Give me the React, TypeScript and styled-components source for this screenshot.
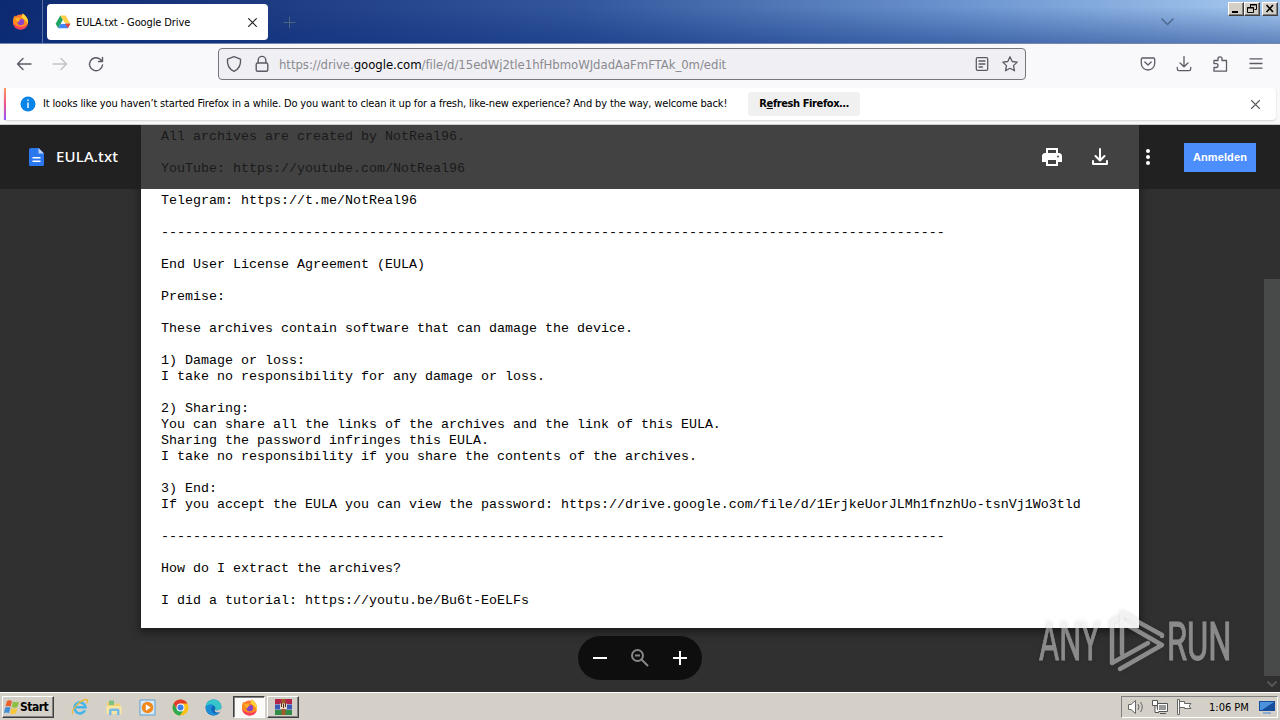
import React from "react";
import styled, { createGlobalStyle } from "styled-components";

const UI_FONT = `"DejaVu Sans Condensed", "DejaVu Sans", "Noto Sans", sans-serif`;

const GlobalStyle = createGlobalStyle`
  body {
    margin: 0;
    overflow: hidden;
    font-family: ${UI_FONT};
  }

  * {
    box-sizing: border-box;
  }

  svg {
    display: block;
    flex: none;
  }
`;

const Desktop = styled.div`
  width: 1280px;
  height: 720px;
  display: flex;
  flex-direction: column;
  overflow: hidden;
`;

const TabStrip = styled.header`
  height: 44px;
  flex: none;
  display: flex;
  align-items: flex-start;
  background:
    linear-gradient(180deg, rgba(255, 255, 255, 0) 15%, rgba(10, 46, 126, 0.45)),
    linear-gradient(90deg, #0c2a70 0, #1c3a80 20%, #33569b 45%, #6c94cf 75%, #a6caf0 100%);
  border-bottom: 1px solid #7588ae;
`;

const PinnedTab = styled.div`
  width: 43px;
  height: 43px;
  padding: 13px 0 0 12px;
  border-right: 1px solid #5a72a8;
`;

const Tab = styled.div`
  width: 221px;
  height: 36px;
  margin: 4px 0 0 4px;
  padding: 0 10px 0 8px;
  display: flex;
  align-items: center;
  border-radius: 4px;
  background: #fff;
`;

const Label = styled.span<{ $size?: number; $spacing?: number; $color?: string }>`
  font-size: ${({ $size }) => $size || 11}px;
  letter-spacing: ${({ $spacing }) => $spacing || 0}px;
  color: ${({ $color }) => $color || "#000"};
  white-space: pre;
`;

const TabTitle = styled(Label)`
  flex: 1;
  margin: 1px 0 0 5px;
`;

const NewTab = styled.div`
  margin: 16px 0 0 15px;
`;

const TabStripEnd = styled.div`
  flex: 1;
  display: flex;
  justify-content: flex-end;
`;

const ListTabs = styled.div`
  margin: 14px 53px 0 0;
`;

const WindowControls = styled.div`
  display: flex;
  padding: 2px 2px 0 0;
`;

const WindowButton = styled.div<{ $gap?: boolean }>`
  width: 16px;
  height: 14px;
  margin-left: ${({ $gap }) => ($gap ? 2 : 0)}px;
  background: #d4d0c8;
  border: 1px solid;
  border-color: #fff #404040 #404040 #fff;
  box-shadow: inset -1px -1px #808080;
`;

const NavBar = styled.nav`
  height: 44px;
  flex: none;
  display: flex;
  align-items: center;
  padding: 0 15px 4px 15px;
  background: #f9f9fb;
`;

const NavButtons = styled.div`
  width: 203px;
  display: flex;
  gap: 18px;
`;

const UrlBar = styled.div`
  width: 808px;
  height: 32px;
  display: flex;
  align-items: center;
  padding: 0 6px;
  border: 1px solid #77767c;
  border-radius: 4px;
  background: #f0f0f4;
`;

const Url = styled.div`
  flex: 1;
  margin-left: 8px;
  font-size: 13px;
  letter-spacing: -0.04px;
  color: #8a8a90;
  white-space: pre;

  b {
    font-weight: normal;
    color: #000;
  }
`;

const UrlIcons = styled.div`
  display: flex;
  gap: 10px;
`;

const NavTools = styled.div`
  flex: 1;
  display: flex;
  justify-content: flex-end;
  gap: 18px;
`;

const NoticeWrap = styled.div`
  height: 37px;
  flex: none;
  padding: 0 4px 4px;
  background: #f9f9fb;
  border-bottom: 1px solid #ccc;
`;

const Notice = styled.div`
  height: 32px;
  position: relative;
  display: flex;
  align-items: center;
  padding: 0 15px 0 16px;
  background: #fff;
  box-shadow: 0 1px 2px rgba(58, 57, 68, 0.2);
  border-radius: 4px;
`;

const NoticeStripe = styled.div`
  position: absolute;
  left: 0;
  top: 0;
  width: 2px;
  height: 32px;
  background: linear-gradient(#ff9a5c, #f0508c 50%, #9059ff);
`;

const NoticeText = styled(Label)`
  width: 705px;
  margin: -2px 0 0 7px;
`;

const RefreshButton = styled.div`
  width: 112px;
  height: 24px;
  margin-right: auto;
  border-radius: 4px;
  background: #f0f0f0;
  font-size: 11px;
  font-weight: bold;
  line-height: 24px;
  letter-spacing: -0.4px;
  text-align: center;
  color: #000;
`;

const Viewer = styled.main`
  height: 567px;
  flex: none;
  position: relative;
  overflow: hidden;
  display: flex;
  flex-direction: column;
  align-items: flex-start;
  background: #303030;
`;

const Paper = styled.pre`
  width: 998px;
  height: 503px;
  margin: 0 0 0 141px;
  padding: 4px 20px 0;
  background: #fff;
  box-shadow: 0 3px 8px 2px rgba(0, 0, 0, 0.4);
  color: #000;
  font: 13.333px / 16px "Liberation Mono", monospace;
`;

const ViewerBar = styled.div`
  position: absolute;
  left: 0;
  top: 0;
  width: 1280px;
  height: 64px;
  display: flex;
  align-items: center;
  padding: 0 24px;
  background: rgba(31, 31, 31, 0.845);
`;

const FileName = styled.div`
  flex: 1;
  margin: -2px 0 0 8px;
  font: 500 15px "Noto Sans", sans-serif;
  letter-spacing: 0.15px;
  color: #fff;
`;

const ViewerActions = styled.div`
  display: flex;
  align-items: center;
  gap: 24px;
`;

const SignIn = styled.div`
  width: 72px;
  height: 29px;
  background: #4c8efb;
  color: #fff;
  font: bold 11px / 29px "Liberation Sans", sans-serif;
  letter-spacing: 0.1px;
  text-align: center;
`;

const ZoomPill = styled.div`
  position: absolute;
  left: 578px;
  top: 511px;
  width: 124px;
  height: 44px;
  display: flex;
  align-items: center;
  justify-content: space-between;
  padding: 0 10px;
  border-radius: 22px;
  background: #0e0e0e;
`;

const Scrollbar = styled.div`
  position: absolute;
  right: 0;
  top: 64px;
  width: 16px;
  height: 503px;
  padding-top: 90px;
  background: #303030;
`;

const ScrollThumb = styled.div`
  height: 397px;
  background: #484a4a;
`;

const Watermark = styled.div`
  position: absolute;
  left: 1036px;
  top: 483px;
  opacity: 0.5;
  filter: drop-shadow(0 0 2px rgba(0, 0, 0, 0.3));

  text {
    font: 53px Roboto, sans-serif;
  }
`;

const Taskbar = styled.footer`
  height: 28px;
  flex: none;
  display: flex;
  align-items: center;
  padding: 1px 2px 0;
  background: #d4d0c8;
  border-top: 1px solid #fff;
`;

const StartButton = styled.div`
  width: 52px;
  height: 22px;
  display: flex;
  align-items: center;
  padding-left: 1px;
  border: 1px solid;
  border-color: #fff #404040 #404040 #fff;
  box-shadow: inset -1px -1px #808080;
  font: bold 12px ${UI_FONT};
  letter-spacing: -0.5px;
  color: #000;
`;

const Launchers = styled.div`
  width: 179px;
  display: flex;
  align-items: center;
  gap: 16px;
  padding-left: 17px;
`;

const TaskButton = styled.div<{ $pressed?: boolean }>`
  width: 32px;
  height: 22px;
  margin-right: 2px;
  display: flex;
  align-items: center;
  justify-content: center;
  border: 1px solid;
  border-color: ${({ $pressed }) =>
    $pressed ? "#404040 #fff #fff #404040" : "#fff #404040 #404040 #fff"};
  box-shadow: ${({ $pressed }) =>
    $pressed ? "inset 1px 1px #808080" : "inset -1px -1px #808080"};
  background: ${({ $pressed }) => ($pressed ? "#fbfaf8" : "#d4d0c8")};
`;

const Tray = styled.div`
  width: 157px;
  height: 22px;
  margin-left: auto;
  display: flex;
  align-items: center;
  padding-left: 5px;
  border: 1px solid;
  border-color: #808080 #fff #fff #808080;
`;

const TrayIcons = styled.div`
  display: flex;
  gap: 8px;
  width: 82px;
`;

const Clock = styled(Label)`
  width: 50px;
`;

type StrokeIconProps = {
  d: string;
  size?: number;
  box?: number;
  color?: string;
  width?: number;
};

const StrokeIcon = ({
  d,
  size = 18,
  box = 18,
  color = "#5b5b66",
  width = 1.4,
}: StrokeIconProps) => (
  <svg
    width={size}
    height={size}
    viewBox={`0 0 ${box} ${box}`}
    fill="none"
    stroke={color}
    strokeWidth={width}
    strokeLinecap="round"
    strokeLinejoin="round"
  >
    <path d={d} />
  </svg>
);

const FirefoxLogo = () => (
  <svg width="17" height="17" viewBox="0 0 17 17">
    <circle cx="8.500" cy="9" r="7.500" fill="#ff7139" />
    <path d="M1 8C1 5 2 4 2.800 2.600L4.500 4.500L10 3L11 .5C14 2.500 16.300 6 16 10C13 16 5 18 1.800 12Z" fill="#ff8a1c" />
    <path d="M10.500 .5C14 3 16.700 6 15.900 11C14.700 8 12 6 9.500 4.200Z" fill="#ffd43a" />
    <path d="M1.200 10C2 15 6 17 10 16.400C13 16 15 14 15.700 11.500C12 14.500 5 15 1.200 10Z" fill="#f8405c" />
    <circle cx="8.800" cy="9" r="3.300" fill="#8a43c8" />
    <path d="M3.500 5C6 4.500 8 5.300 9 6.800C7.500 7 6.600 7.700 7 9C4.800 9 3.500 7.500 3.500 5Z" fill="#ffae25" />
  </svg>
);

const DriveLogo = () => (
  <svg width="16" height="16" viewBox="0 0 16 16">
    <path d="M5.400 1.500L8 6L3.200 14.300L.6 9.800Z" fill="#20a464" />
    <path d="M5.400 1.500H10.600L15.400 9.800H10.200Z" fill="#ffcf48" />
    <path d="M5.700 9.800H15.400L12.800 14.300H3.200Z" fill="#4086f4" />
    <path d="M12.800 14.300L10.200 9.800H15.400Z" fill="#ea4335" />
    <path d="M8 6L10.200 9.800H5.800Z" fill="#fff" />
  </svg>
);

const WindowsFlag = () => (
  <svg width="16" height="16" viewBox="0 0 16 16">
    <path d="M3 2Q5 .5 8 2L6.700 7.500Q4 6.300 1.500 7.500Z" fill="#e9602c" />
    <path d="M9 2.500Q12 4 15 2.500L13.500 8Q11 9.300 7.700 8Z" fill="#8bc043" />
    <path d="M1.300 8.500Q4 7.300 6.500 8.500L5 14Q2.500 13 0 14Z" fill="#3f8ed8" />
    <path d="M7.500 9Q10.500 10.300 13.200 9L12 14.300Q9 15.800 6 14.500Z" fill="#f9c838" />
  </svg>
);

const ExplorerLogo = () => (
  <svg width="18" height="18" viewBox="0 0 18 18" fill="none">
    <path d="M14 12.300A5.500 5.500 0 1 1 14.500 9.300H5" stroke="#45b4ea" strokeWidth="2.600" />
    <path d="M2 16C-1 13 9 2 15 1.500C18 1.500 16.500 4 15.500 5.500" stroke="#e8b93c" strokeWidth="1.300" />
  </svg>
);

const FolderLogo = () => (
  <svg width="18" height="18" viewBox="0 0 18 18">
    <path d="M2 4H7L8.500 5.500H15V16H2Z" fill="#efd077" />
    <path d="M4 2.500H9V7H4Z" fill="#7dc080" />
    <path d="M1.500 8H16.500V16H1.500Z" fill="#f8e6a0" />
    <path d="M4 17V12Q4 10.500 6 10.500H13Q14.500 10.500 14.500 12V17H12V13H6.500V17Z" fill="#79b9e5" />
  </svg>
);

const MediaLogo = () => (
  <svg width="17" height="17" viewBox="0 0 17 17">
    <path d="M1 1H16V16H1Z" fill="#d8e9f7" stroke="#5b9fd3" />
    <circle cx="8.500" cy="8.500" r="5.800" fill="#f08a1d" />
    <path d="M6.800 5.300L11.800 8.500L6.800 11.700Z" fill="#fff" />
  </svg>
);

const ChromeLogo = () => (
  <svg width="17" height="17" viewBox="0 0 17 17">
    <circle cx="8.500" cy="8.500" r="8" fill="#fbc116" />
    <path d="M1.600 4.500A8 8 0 0 1 15.400 4.500H8.500L5 10.500Z" fill="#e33b2e" />
    <path d="M1.600 4.500A8 8 0 0 0 8 16.500L11.900 10.500L5 10.500Z" fill="#2da94f" />
    <circle cx="8.500" cy="8.500" r="4" fill="#fff" />
    <circle cx="8.500" cy="8.500" r="3" fill="#3f7de8" />
  </svg>
);

const EdgeLogo = () => (
  <svg width="17" height="17" viewBox="0 0 17 17">
    <circle cx="8.500" cy="8.500" r="8" fill="#1468b8" />
    <path d="M.6 8C1 3 5 .4 8.500 .5C13 .5 16.500 4 16.500 7.500C16.500 11 12 12.300 10 10.700C11.500 8 9 6 6.500 6C4 6 1.500 7 .6 8Z" fill="#36c6c9" />
    <path d="M.6 8C2 5 7 4.500 9 6.500C6 7 5.500 10 7 12.500C8.500 15 12 15 14.500 13.500C10 19 1 16.500 .6 8Z" fill="#1b8fd6" />
    <path d="M10 10.700C12 12.300 16.500 11 16.500 7.500V12L14.500 13.200C12 14 9 13 10 10.700Z" fill="#d4d0c8" />
  </svg>
);

const ArchiveLogo = () => (
  <svg width="17" height="16" viewBox="0 0 17 16">
    <path d="M0 0H17V5H0Z" fill="#b3264a" />
    <path d="M0 5.500H17V10.500H0Z" fill="#3c59b5" />
    <path d="M0 11H17V16H0Z" fill="#2f8b46" />
    <path d="M6.500 0H10.500V16H6.500Z" fill="#a35b2a" />
    <path d="M5 4.500H12V10H5Z" fill="#e7d9c4" />
    <path d="M6.500 4V8M8.500 5V9M10.500 4V8" stroke="#5b2b21" />
  </svg>
);

const EULA = `All archives are created by NotReal96.

YouTube: https://youtube.com/NotReal96

Telegram: https://t.me/NotReal96

${"-".repeat(98)}

End User License Agreement (EULA)

Premise:

These archives contain software that can damage the device.

1) Damage or loss:
I take no responsibility for any damage or loss.

2) Sharing:
You can share all the links of the archives and the link of this EULA.
Sharing the password infringes this EULA.
I take no responsibility if you share the contents of the archives.

3) End:
If you accept the EULA you can view the password: https://drive.google.com/file/d/1ErjkeUorJLMh1fnzhUo-tsnVj1Wo3tld

${"-".repeat(98)}

How do I extract the archives?

I did a tutorial: https://youtu.be/Bu6t-EoELFs`;

const BrowserTabs = () => (
  <TabStrip>
    <PinnedTab>
      <FirefoxLogo />
    </PinnedTab>
    <Tab>
      <DriveLogo />
      <TabTitle $spacing={-0.12}>EULA.txt - Google Drive</TabTitle>
      <StrokeIcon d="M1.500 1.500L8.500 8.500M8.500 1.500L1.500 8.500" size={11} box={10} color="#222" width={1.1} />
    </Tab>
    <NewTab>
      <StrokeIcon d="M6.500 1V12M1 6.500H12" size={13} box={13} color="#4c6482" width={1} />
    </NewTab>
    <TabStripEnd>
      <ListTabs>
        <StrokeIcon d="M2 5L7.500 10.500L13 5" size={15} box={15} color="#4d698f" width={1.5} />
      </ListTabs>
      <WindowControls>
        <WindowButton>
          <svg width="13" height="11">
            <path d="M3 8H9V10H3Z" />
          </svg>
        </WindowButton>
        <WindowButton>
          <svg width="13" height="11" fill="none" stroke="#000">
            <path d="M5.500 4V1.500H11.500V6.500H9.500M5 2H12M2.500 4.500H8.500V9.500H2.500ZM2 5H9" />
          </svg>
        </WindowButton>
        <WindowButton $gap>
          <svg width="13" height="11" fill="none" stroke="#000" strokeWidth="1.600">
            <path d="M3.500 2L10 9M10 2L3.500 9" />
          </svg>
        </WindowButton>
      </WindowControls>
    </TabStripEnd>
  </TabStrip>
);

const BrowserNav = () => (
  <NavBar>
    <NavButtons>
      <StrokeIcon d="M16 9H2.500M8 3.500L2.500 9L8 14.500" />
      <StrokeIcon d="M2 9H15.500M10 3.500L15.500 9L10 14.500" color="#c3c3c8" />
      <StrokeIcon d="M15.500 10A6.500 6.500 0 1 1 13.500 4.500L15.500 6.500M15.500 2.500V6.500H11.500" />
    </NavButtons>
    <UrlBar>
      <StrokeIcon d="M9 1.700L15.500 4.200C16 9 14 14 9 16.300C4 14 2 9 2.500 4.200Z" />
      <svg width="28" height="18" viewBox="-10 0 28 18" fill="none" stroke="#5b5b66" strokeWidth="1.400">
        <rect x="3.200" y="8" width="11.600" height="8.300" rx="1.500" />
        <path d="M5.200 8V5.200A3.800 3.800 0 0 1 12.800 5.200V8" />
      </svg>
      <Url>
        https://drive.<b>google.com</b>/file/d/15edWj2tle1hfHbmoWJdadAaFmFTAk_0m/edit
      </Url>
      <UrlIcons>
        <StrokeIcon d="M4.500 2.700H13.500Q14.700 2.700 14.700 4V14Q14.700 15.300 13.500 15.300H4.500Q3.300 15.300 3.300 14V4Q3.300 2.700 4.500 2.700ZM6 6H12M6 9H12M6 12H9.500" width={1.3} />
        <StrokeIcon d="M9 1.800L11.200 6.500L16.200 7.100L12.500 10.600L13.500 15.800L9 13.300L4.500 15.800L5.500 10.600L1.800 7.100L6.800 6.500Z" width={1.3} />
      </UrlIcons>
    </UrlBar>
    <NavTools>
      <StrokeIcon d="M3.500 3H14.500Q15.700 3 15.700 4.200V8.500A6.700 6.500 0 0 1 2.300 8.500V4.200Q2.300 3 3.500 3ZM5.800 7L9 10L12.200 7" width={1.3} />
      <StrokeIcon d="M9 1.500V11.500M5 8L9 11.700L13 8M2.300 12.500V14Q2.300 15.700 4 15.700H14Q15.700 15.700 15.700 14V12.500" width={1.3} />
      <StrokeIcon d="M3 16.200V12.500H5Q7 12.500 7 10.500T5 8.600H3V5.500H7V3.800Q7 1.800 9 1.800T11 3.800V5.500H15.500V16.200Z" width={1.3} />
      <StrokeIcon d="M3 3.800H15M3 8.500H15M3 13.200H15" width={1.3} />
    </NavTools>
  </NavBar>
);

const RefreshNotice = () => (
  <NoticeWrap>
    <Notice>
      <NoticeStripe />
      <svg width="16" height="16" viewBox="0 0 16 16">
        <circle cx="8" cy="8" r="7.500" fill="#0b84e8" />
        <path d="M7.300 3.500H8.700V5H7.300ZM7.300 6.500H8.700V12H7.300Z" fill="#fff" />
      </svg>
      <NoticeText $spacing={-0.147}>
        It looks like you haven’t started Firefox in a while. Do you want to clean it up for a fresh, like-new experience? And by the way, welcome back!
      </NoticeText>
      <RefreshButton>
        R<u>e</u>fresh Firefox…
      </RefreshButton>
      <StrokeIcon d="M1.500 1.500L9.500 9.500M9.500 1.500L1.500 9.500" size={11} box={11} width={1.1} />
    </Notice>
  </NoticeWrap>
);

const DriveViewer = () => (
  <Viewer>
    <Paper>{EULA}</Paper>
    <Scrollbar>
      <ScrollThumb />
      <StrokeIcon d="M4 6L8 10L12 6" size={16} box={16} color="#555" width={2} />
    </Scrollbar>
    <ViewerBar>
      <svg width="24" height="24" viewBox="0 0 24 24">
        <path d="M7 3H14.500L20 8.500V19.500Q20 21 18.500 21H6.500Q5 21 5 19.500V4.500Q5 3 7 3Z" fill="#2a77ee" />
        <path d="M14.500 3L20 8.500H14.500Z" fill="#b7d2fb" />
        <path d="M8.500 12H16.500V13.600H8.500ZM8.500 15.500H16.500V17.100H8.500Z" fill="#fff" />
      </svg>
      <FileName>EULA.txt</FileName>
      <ViewerActions>
        <svg width="24" height="24" viewBox="0 0 24 24" fill="#fff">
          <path d="M19 8h-1V3H6v5H5c-1.660 0-3 1.340-3 3v6h4v4h12v-4h4v-6c0-1.660-1.340-3-3-3zM8 5h8v3H8V5zm8 12v2H8v-4h8v2zm2-2v-2H6v2H4v-4c0-.55.45-1 1-1h14c.55 0 1 .45 1 1v4h-2z" />
          <path d="M4 10H20V13H4ZM4 13H6V15H4ZM18 13H20V15H18Z" />
          <circle cx="18" cy="11.500" r="1" fill="#424242" />
        </svg>
        <StrokeIcon d="M12 4V15M7.500 11L12 15.500L16.500 11M5 16V19H19V16" size={24} box={24} color="#fff" width={2} />
        <svg width="24" height="24" viewBox="0 0 24 24" fill="#fff">
          <circle cx="12" cy="6" r="2" />
          <circle cx="12" cy="12" r="2" />
          <circle cx="12" cy="18" r="2" />
        </svg>
        <SignIn>Anmelden</SignIn>
      </ViewerActions>
    </ViewerBar>
    <ZoomPill>
      <svg width="24" height="24" fill="#fff">
        <path d="M5 11H19V13H5Z" />
      </svg>
      <svg width="24" height="24" fill="none" stroke="#868686" strokeWidth="2">
        <circle cx="9.500" cy="9.500" r="5.500" />
        <path d="M13.500 13.500L20 20M7 9.500H12" />
      </svg>
      <svg width="24" height="24" fill="#fff">
        <path d="M5 11H11V5H13V11H19V13H13V19H11V13H5Z" />
      </svg>
    </ZoomPill>
    <Watermark>
      <svg width="204" height="72" viewBox="0 0 204 72" fill="none" stroke="#e6e6e6">
        <text transform="translate(3 52) scale(0.585 1)" fill="#e6e6e6" strokeWidth="1">ANY</text>
        <text transform="translate(131 52) scale(0.615 1)" fill="#e6e6e6" strokeWidth="1">RUN</text>
        <path
          d="M86 46V5L126 27V28M86 14L126 37L84 61M80 11L76 14V55L112 35"
          strokeWidth="4.500"
          strokeLinecap="round"
          strokeLinejoin="round"
        />
      </svg>
    </Watermark>
  </Viewer>
);

const SystemTaskbar = () => (
  <Taskbar>
    <StartButton>
      <WindowsFlag />
      Start
    </StartButton>
    <Launchers>
      <ExplorerLogo />
      <FolderLogo />
      <MediaLogo />
      <ChromeLogo />
      <EdgeLogo />
    </Launchers>
    <TaskButton $pressed>
      <FirefoxLogo />
    </TaskButton>
    <TaskButton>
      <ArchiveLogo />
    </TaskButton>
    <Tray>
      <TrayIcons>
        <svg width="17" height="16" fill="#fff" stroke="#666">
          <path d="M1.500 5.500H4L8.500 1.500V14.500L4 10.500H1.500Z" />
          <path d="M11 5Q13 8 11 11M13.500 3Q17 8 13.500 13" fill="none" />
        </svg>
        <svg width="16" height="16" fill="#fff" stroke="#555">
          <path d="M5.500 4.500H15.500V12.500H5.500ZM8 14.500H14" />
          <path d="M7 6H14V11H7Z" fill="#999" stroke="none" />
          <path d="M.5 1.500H5.500V6.500H.5ZM3 6.500V13.500H7" />
        </svg>
        <svg width="17" height="16" fill="#fff" stroke="#666">
          <path d="M1.500 15.500V.5H3.500V15.500ZM3.500 2.500H8.500V4.500H15L13 7L15 9.500H8.500V8.500H3.500Z" />
        </svg>
      </TrayIcons>
      <Clock>1:06 PM</Clock>
      <svg width="16" height="15">
        <path d="M0 1H16V11H0Z" fill="#174e9c" />
        <path d="M1 2H15L3 10H1Z" fill="#4c91dc" />
        <path d="M4 12H12V14H4Z" fill="#8bacd0" />
      </svg>
    </Tray>
  </Taskbar>
);

const App = () => (
  <Desktop>
    <GlobalStyle />
    <BrowserTabs />
    <BrowserNav />
    <RefreshNotice />
    <DriveViewer />
    <SystemTaskbar />
  </Desktop>
);

export default App;
